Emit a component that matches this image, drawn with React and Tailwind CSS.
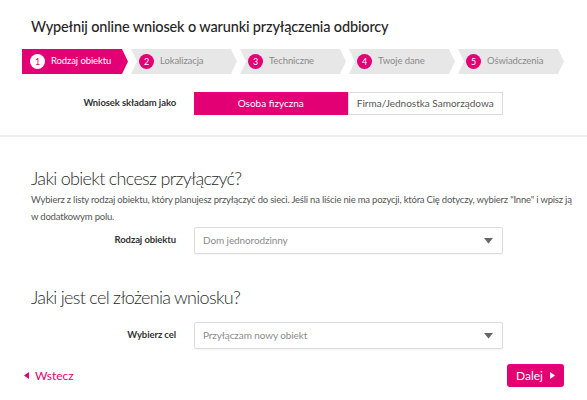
const steps = ['Rodzaj obiektu', 'Lokalizacja', 'Techniczne', 'Twoje dane', 'Oświadczenia'];

const Step = ({ n, label, active }) => {
  return (
    <div
      className={
        active
          ? 'flex h-[25px] w-[106px] items-center bg-[#e20074] pl-[8px] [clip-path:polygon(0_0,calc(100%-6px)_0,100%_50%,calc(100%-6px)_100%,0_100%)]'
          : 'flex h-[25px] w-[106px] items-center bg-[#e7e7e7] pl-[8px] [clip-path:polygon(0_0,calc(100%-6px)_0,100%_50%,calc(100%-6px)_100%,0_100%,6px_50%)]'
      }
    >
      <span
        className={
          active
            ? 'flex h-[15px] w-[15px] items-center justify-center rounded-full bg-white text-[9px] text-[#e20074]'
            : 'flex h-[15px] w-[15px] items-center justify-center rounded-full bg-[#e20074] text-[9px] text-white'
        }
      >
        {n}
      </span>
      <span
        className={
          active
            ? 'ml-[6px] text-[9.5px] tracking-[-0.1px] text-white'
            : 'ml-[6px] text-[9.5px] tracking-[-0.1px] text-[#8a8a8a]'
        }
      >
        {label}
      </span>
    </div>
  );
};

const Select = ({ value }) => (
  <div className="flex h-[27px] w-[309px] items-center justify-between rounded-[2px] border border-[#dcdcdc] bg-white pl-[8px] pr-[8px] shadow-[0_1px_1px_rgba(0,0,0,0.04)]">
    <span className="text-[10px] tracking-[-0.1px] text-[#8c8c8c]">{value}</span>
    <svg width="9" height="6" viewBox="0 0 9 6" className="mr-[1px]">
      <path d="M0 0 L9 0 L4.5 5.5 Z" fill="#666" />
    </svg>
  </div>
);

const Row = ({ label, children }) => (
  <div className="flex items-center">
    <div className="w-[154px] text-right text-[9.5px] font-bold tracking-[-0.1px] text-[#333]">{label}</div>
    <div className="ml-[18px]">{children}</div>
  </div>
);

export default function App() {
  return (
    <div className="h-[400px] w-[587px] overflow-hidden bg-white font-['Lato',sans-serif] text-[#333]">
      <div className="px-[22px] pt-[16px]">
        <h1 className="pl-[9px] text-[14.5px] font-medium leading-[22px] tracking-[-0.15px] text-[#262626]">
          Wypełnij online wniosek o warunki przyłączenia odbiorcy
        </h1>
        <div className="mt-[11px] flex gap-[3px]">
          {steps.map((s, i) => (
            <Step key={s} n={i + 1} label={s} active={i === 0} />
          ))}
        </div>
        <div className="mt-[18px] flex items-center">
          <div className="w-[154px] text-right text-[9.5px] font-bold tracking-[-0.1px] text-[#333]">
            Wniosek składam jako
          </div>
          <div className="ml-[18px] flex h-[23px] w-[309px]">
            <div className="flex flex-1 items-center justify-center bg-[#e20074] text-[10px] text-white">
              Osoba fizyczna
            </div>
            <div className="flex flex-1 items-center justify-center border border-[#dcdcdc] bg-white text-[10px] text-[#555]">
              Firma/Jednostka Samorządowa
            </div>
          </div>
        </div>
      </div>

      <div className="mt-[20px] h-[2px] bg-[#f0f0f0]" />

      <div className="px-[22px]">
        <h2 className="mt-[28px] pl-[9px] text-[18px] font-light leading-[26px] tracking-[-0.7px] text-[#2a2a2a]">
          Jaki obiekt chcesz przyłączyć?
        </h2>
        <p className="pl-[9px] text-[9.5px] leading-[17px] tracking-[-0.2px] text-[#555]">
          <span className="whitespace-nowrap">
            Wybierz z listy rodzaj obiektu, który planujesz przyłączyć do sieci. Jeśli na liście nie ma pozycji, która Cię
            dotyczy, wybierz "Inne" i wpisz ją
          </span>
          <br />w dodatkowym polu.
        </p>
        <div className="mt-[2px]">
          <Row label="Rodzaj obiektu">
            <Select value="Dom jednorodzinny" />
          </Row>
        </div>

        <h2 className="mt-[30px] pl-[9px] text-[18px] font-light leading-[26px] tracking-[-0.7px] text-[#2a2a2a]">
          Jaki jest cel złożenia wniosku?
        </h2>
        <div className="mt-[12px]">
          <Row label="Wybierz cel">
            <Select value="Przyłączam nowy obiekt" />
          </Row>
        </div>

        <div className="mt-[15px] flex items-center justify-between">
          <button className="flex items-center gap-[6px] pl-[2px] text-[12px] text-[#e20074]">
            <svg width="5" height="7" viewBox="0 0 5 7">
              <path d="M5 0 L5 7 L0 3.5 Z" fill="#e20074" />
            </svg>
            Wstecz
          </button>
          <button className="mr-[1px] flex h-[23px] w-[57px] items-center justify-center gap-[7px] rounded-[3px] bg-[#e20074] text-[12px] text-white">
            Dalej
            <svg width="5" height="7" viewBox="0 0 5 7">
              <path d="M0 0 L5 3.5 L0 7 Z" fill="#fff" />
            </svg>
          </button>
        </div>
      </div>
    </div>
  );
}
